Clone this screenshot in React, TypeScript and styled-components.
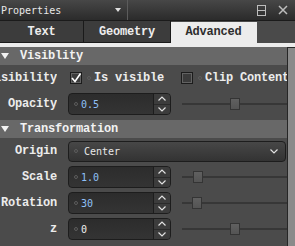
import React from "react";
import styled, { createGlobalStyle } from "styled-components";

const Global = createGlobalStyle`
  html, body { margin: 0; padding: 0; background: #4b4b4b; }
  body { width: 295px; height: 246px; overflow: hidden; }
`;

const Panel = styled.div`
  width: 295px;
  height: 246px;
  display: flex;
  flex-direction: column;
  background: #4b4b4b;
  overflow: hidden;
`;

const TitleBar = styled.div`
  height: 20px;
  flex: none;
  display: flex;
  align-items: center;
  background: linear-gradient(#474747, #2b2b2b);
  border-bottom: 1px solid #1b1b1b;
  color: #e8e8e8;
  font-family: "DejaVu Sans Mono", monospace;
  font-size: 10px;
`;

const TitleSection = styled.div`
  width: 128px;
  height: 100%;
  box-sizing: border-box;
  display: flex;
  align-items: center;
  justify-content: space-between;
  padding: 0 6px 0 1px;
  border-right: 1px solid #5c5c5c;
`;

const TitleActions = styled.div`
  margin-left: auto;
  display: flex;
  align-items: center;
  gap: 12px;
  padding-right: 7px;
  color: #bdbdbd;
`;

const TabBar = styled.div`
  height: 22px;
  flex: none;
  display: flex;
  background: #4a4a4a;
`;

const Tab = styled.div<{ $w: number; $active?: boolean }>`
  width: ${(p) => p.$w}px;
  box-sizing: border-box;
  display: flex;
  align-items: center;
  justify-content: center;
  font-family: "Liberation Mono", monospace;
  font-weight: bold;
  font-size: 12px;
  letter-spacing: -0.2px;
  background: ${(p) => (p.$active ? "#ececec" : "#3c3c3c")};
  color: ${(p) => (p.$active ? "#2e2e2e" : "#ededed")};
  border-right: 1px solid ${(p) => (p.$active ? "#ececec" : "#1a1a1a")};
  border-bottom: 1px solid ${(p) => (p.$active ? "#ececec" : "#1a1a1a")};
  margin-top: ${(p) => (p.$active ? "1px" : "0")};
`;

const Strip = styled.div`
  height: 4px;
  flex: none;
  background: #ececec;
`;

const Body = styled.div`
  flex: 1;
  display: flex;
  min-height: 0;
`;

const Content = styled.div`
  flex: 1;
  display: flex;
  flex-direction: column;
  min-width: 0;
`;

const Scrollbar = styled.div`
  width: 7px;
  flex: none;
  background: #8a8a8a;
  border-left: 1px solid #262626;
  border-top: 1px solid #262626;
`;

const SectionHeader = styled.div<{ $mt?: number }>`
  height: 18px;
  flex: none;
  margin-top: ${(p) => p.$mt ?? 0}px;
  display: flex;
  align-items: center;
  gap: 11px;
  padding-left: 1px;
  background: #686868;
  color: #f2f2f2;
  font-family: "Liberation Mono", monospace;
  font-weight: bold;
  font-size: 12px;
  letter-spacing: -0.2px;
`;

const Row = styled.div`
  height: 26px;
  flex: none;
  display: flex;
  align-items: center;
`;

const Label = styled.div`
  width: 57px;
  flex: none;
  margin-right: 11px;
  display: flex;
  justify-content: flex-end;
  overflow: hidden;
  white-space: nowrap;
  color: #ececec;
  font-family: "Liberation Mono", monospace;
  font-weight: bold;
  font-size: 12px;
  letter-spacing: -0.2px;
`;

const CheckItem = styled.div<{ $mr?: number }>`
  display: flex;
  align-items: center;
  margin-left: 2px;
  margin-right: ${(p) => p.$mr ?? 0}px;
  white-space: nowrap;
  color: #ececec;
  font-family: "Liberation Mono", monospace;
  font-weight: bold;
  font-size: 12px;
  letter-spacing: -0.2px;
`;

const Box = styled.div`
  width: 12px;
  height: 12px;
  box-sizing: border-box;
  border: 1px solid #1c1c1c;
  box-shadow: inset 0 0 0 1px #626262;
  background: #3b3b3b;
  display: flex;
  align-items: center;
  justify-content: center;
`;

const Dot = styled.span<{ $ml?: number; $mr?: number }>`
  width: 4px;
  height: 4px;
  flex: none;
  border-radius: 50%;
  border: 1px solid #5d5d5d;
  box-sizing: border-box;
  margin-left: ${(p) => p.$ml ?? 0}px;
  margin-right: ${(p) => p.$mr ?? 0}px;
`;

const Spin = styled.div`
  width: 103px;
  height: 22px;
  flex: none;
  box-sizing: border-box;
  border: 1px solid #1d1d1d;
  border-radius: 4px;
  background: linear-gradient(#2c2c2c, #343434);
  display: flex;
  overflow: hidden;
`;

const Field = styled.div`
  flex: 1;
  display: flex;
  align-items: center;
  padding-left: 5px;
`;

const Value = styled.span<{ $blue?: boolean }>`
  font-family: "DejaVu Sans Mono", monospace;
  font-size: 10px;
  color: ${(p) => (p.$blue ? "#8fc0f7" : "#f0f0f0")};
`;

const SpinButtons = styled.div`
  width: 16px;
  flex: none;
  display: flex;
  flex-direction: column;
  border-left: 1px solid #1d1d1d;
`;

const SpinButton = styled.div<{ $top?: boolean }>`
  flex: 1;
  display: flex;
  align-items: center;
  justify-content: center;
  background: #3c3c3c;
  border-bottom: ${(p) => (p.$top ? "1px solid #2a2a2a" : "none")};
`;

const Slider = styled.div`
  flex: 1;
  margin-left: 11px;
  height: 12px;
  position: relative;
`;

const Groove = styled.div`
  position: absolute;
  left: 0;
  right: 0;
  top: 5px;
  height: 2px;
  background: #373737;
`;

const Handle = styled.div`
  position: absolute;
  top: 0;
  width: 10px;
  height: 12px;
  box-sizing: border-box;
  background: linear-gradient(#606060, #545454);
  border: 1px solid #343434;
`;

const Dropdown = styled.div`
  width: 218px;
  height: 21px;
  flex: none;
  box-sizing: border-box;
  border: 1px solid #1d1d1d;
  border-radius: 4px;
  background: linear-gradient(#474747, #333333);
  display: flex;
  align-items: center;
  padding: 0 7px 0 5px;
  color: #e8e8e8;
  font-family: "DejaVu Sans Mono", monospace;
  font-size: 10px;
`;

const Chevron = ({ up }: { up?: boolean }) => (
  <svg width="8" height="5" viewBox="0 0 8 5">
    <polyline
      points={up ? "0.5,4.5 4,1 7.5,4.5" : "0.5,0.5 4,4 7.5,0.5"}
      fill="none"
      stroke="#e0e0e0"
      strokeWidth="1.2"
    />
  </svg>
);

const Triangle = () => (
  <svg width="8" height="6" viewBox="0 0 8 6">
    <polygon points="0,0 8,0 4,6" fill="#f2f2f2" />
  </svg>
);

const SpinBox = ({ value, blue }: { value: string; blue?: boolean }) => (
  <Spin>
    <Field>
      <Dot $mr={3} />
      <Value $blue={blue}>{value}</Value>
    </Field>
    <SpinButtons>
      <SpinButton $top>
        <Chevron up />
      </SpinButton>
      <SpinButton>
        <Chevron />
      </SpinButton>
    </SpinButtons>
  </Spin>
);

const SliderTrack = ({ pos }: { pos: number }) => (
  <Slider>
    <Groove />
    <Handle style={{ left: `${pos}px` }} />
  </Slider>
);

export default function App() {
  return (
    <>
      <Global />
      <Panel>
        <TitleBar>
          <TitleSection>
            <span>Properties</span>
            <svg width="6" height="4" viewBox="0 0 6 4">
              <polygon points="0,0 6,0 3,4" fill="#e0e0e0" />
            </svg>
          </TitleSection>
          <TitleActions>
            <svg width="9" height="11" viewBox="0 0 9 11">
              <rect x="0.5" y="0.5" width="8" height="10" fill="none" stroke="#bdbdbd" />
              <line x1="0.5" y1="5.5" x2="8.5" y2="5.5" stroke="#bdbdbd" />
            </svg>
            <svg width="10" height="10" viewBox="0 0 10 10">
              <path d="M1 1 L9 9 M9 1 L1 9" stroke="#bdbdbd" strokeWidth="1.5" />
            </svg>
          </TitleActions>
        </TitleBar>
        <TabBar>
          <Tab $w={84}>Text</Tab>
          <Tab $w={87}>Geometry</Tab>
          <Tab $w={86} $active>
            Advanced
          </Tab>
        </TabBar>
        <Strip />
        <Body>
          <Content>
            <SectionHeader>
              <Triangle />
              <span>Visiblity</span>
            </SectionHeader>
            <Row>
              <Label>Visibility</Label>
              <CheckItem $mr={15}>
                <Box>
                  <svg width="10" height="10" viewBox="0 0 10 10">
                    <polyline points="1,5 4,8.5 9.5,0.5" fill="none" stroke="#ffffff" strokeWidth="1.6" />
                  </svg>
                </Box>
                <Dot $ml={5} $mr={3} />
                <span>Is visible</span>
              </CheckItem>
              <CheckItem>
                <Box />
                <Dot $ml={5} $mr={3} />
                <span>Clip Content</span>
              </CheckItem>
            </Row>
            <Row>
              <Label>Opacity</Label>
              <SpinBox value="0.5" blue />
              <SliderTrack pos={48} />
            </Row>
            <SectionHeader $mt={3}>
              <Triangle />
              <span>Transformation</span>
            </SectionHeader>
            <Row>
              <Label>Origin</Label>
              <Dropdown>
                <Dot $mr={6} />
                <span>Center</span>
                <span style={{ marginLeft: "auto", display: "flex" }}>
                  <Chevron />
                </span>
              </Dropdown>
            </Row>
            <Row>
              <Label>Scale</Label>
              <SpinBox value="1.0" blue />
              <SliderTrack pos={11} />
            </Row>
            <Row>
              <Label>Rotation</Label>
              <SpinBox value="30" blue />
              <SliderTrack pos={10} />
            </Row>
            <Row>
              <Label>z</Label>
              <SpinBox value="0" />
              <SliderTrack pos={48} />
            </Row>
          </Content>
          <Scrollbar />
        </Body>
      </Panel>
    </>
  );
}
